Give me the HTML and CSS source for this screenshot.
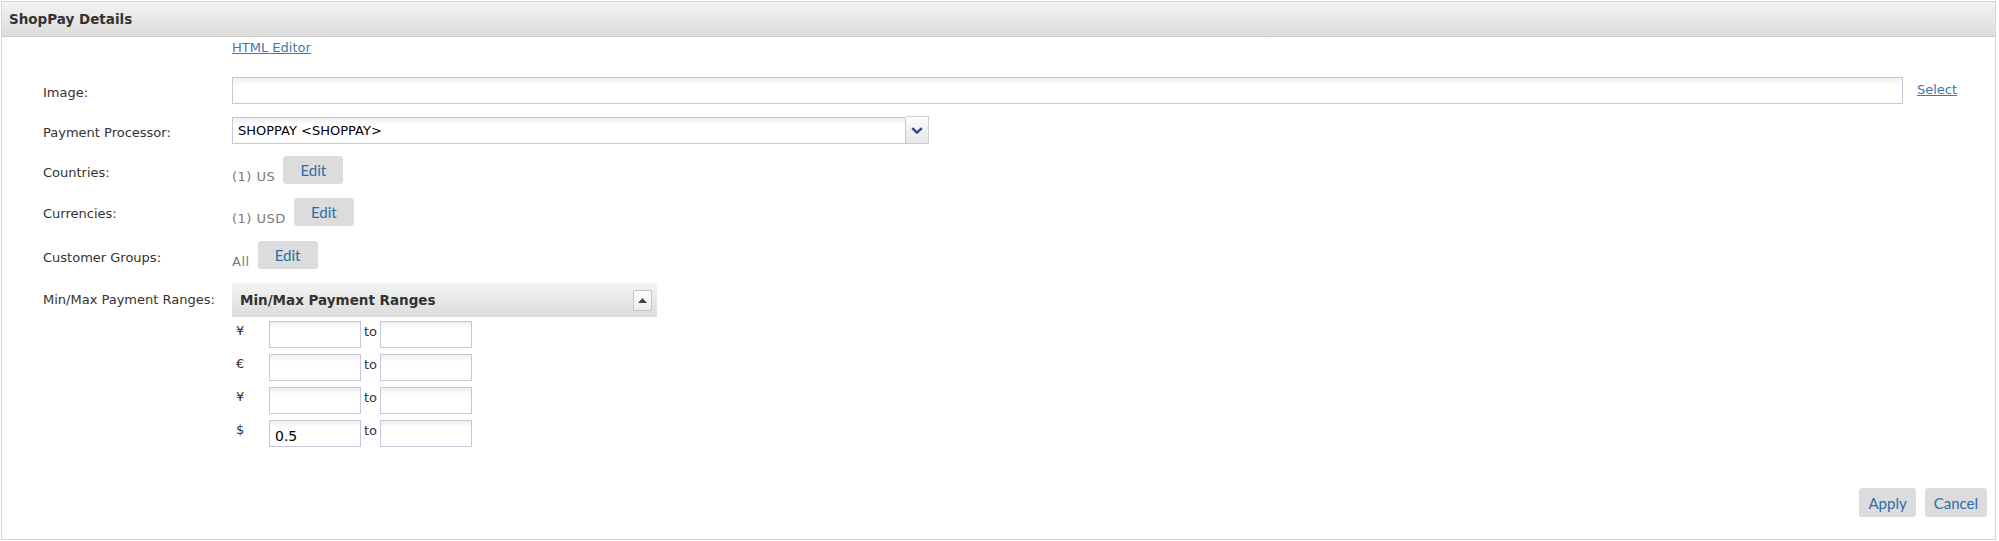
FILE: index.html
```html
<!DOCTYPE html>
<html>
<head>
<meta charset="utf-8">
<link rel="stylesheet" href="styles.css">
</head>
<body>
<div class="panel">
  <div class="panel-head">ShopPay Details</div>
  <div class="form">
    <div></div>
    <div class="cell editor"><a class="link" href="#">HTML Editor</a></div>
    <div></div>

    <div class="lbl">Image:</div>
    <div class="cell"><input class="txt wide" type="text"></div>
    <div class="cell"><a class="link select-link" href="#">Select</a></div>

    <div class="lbl">Payment Processor:</div>
    <div class="cell">
      <div class="dropdown">
        <div class="dd-text">SHOPPAY &lt;SHOPPAY&gt;</div>
        <div class="dd-btn"><svg width="12" height="7" viewBox="0 0 12 7"><path d="M1.2 1.2 L6 5.6 L10.8 1.2" fill="none" stroke="#2d4a86" stroke-width="2.4"/></svg></div>
      </div>
    </div>
    <div></div>

    <div class="lbl">Countries:</div>
    <div class="cell val"><span class="muted">(1) US</span><button class="btn edit">Edit</button></div>
    <div></div>

    <div class="lbl">Currencies:</div>
    <div class="cell val"><span class="muted">(1) USD</span><button class="btn edit">Edit</button></div>
    <div></div>

    <div class="lbl">Customer Groups:</div>
    <div class="cell val"><span class="muted">All</span><button class="btn edit">Edit</button></div>
    <div></div>

    <div class="lbl lbl-top">Min/Max Payment Ranges:</div>
    <div class="ranges">
      <div class="ranges-head">
        <span>Min/Max Payment Ranges</span>
        <span class="toggle"><svg width="9" height="5" viewBox="0 0 9 5"><path d="M0 5 L4.5 0 L9 5 Z" fill="#444"/></svg></span>
      </div>
      <div class="range-row"><span class="sym">¥</span><input class="txt small" type="text"><span class="to">to</span><input class="txt small" type="text"></div>
      <div class="range-row"><span class="sym">€</span><input class="txt small" type="text"><span class="to">to</span><input class="txt small" type="text"></div>
      <div class="range-row"><span class="sym">¥</span><input class="txt small" type="text"><span class="to">to</span><input class="txt small" type="text"></div>
      <div class="range-row"><span class="sym">$</span><input class="txt small val-in" type="text" value="0.5"><span class="to">to</span><input class="txt small" type="text"></div>
    </div>
    <div></div>
  </div>
  <div class="footer">
    <button class="btn action">Apply</button>
    <button class="btn action">Cancel</button>
  </div>
</div>
</body>
</html>
```

FILE: styles.css
```css
html, body {
  margin: 0;
  padding: 0;
  background: #fff;
}
body {
  font-family: "DejaVu Sans", Verdana, sans-serif;
  font-size: 13px;
  color: #333;
}
.panel {
  box-sizing: border-box;
  margin: 1px 0 0 1px;
  width: 1995px;
  height: 539px;
  border: 1px solid #d6d6d6;
  display: flex;
  flex-direction: column;
}
.panel-head {
  height: 34px;
  line-height: 34px;
  padding-left: 7px;
  font-weight: bold;
  font-size: 13.5px;
  color: #333;
  background: linear-gradient(#f3f3f3, #dcdcdc);
  border-bottom: 1px solid #c9c9c9;
}
.form {
  display: grid;
  grid-template-columns: 189px 1fr 92px;
  grid-template-rows: 33px 40px 40px 40px 43px 44px auto;
  padding-left: 41px;
}
.cell {
  display: flex;
  align-items: center;
}
.editor {
  align-items: flex-start;
  padding-top: 3px;
}
.lbl {
  align-self: center;
  line-height: 16px;
  padding-top: 5px;
  color: #333;
}
.lbl-top {
  align-self: start;
  margin-top: 6px;
  padding-top: 0;
  line-height: 34px;
}
.link {
  color: #4674b3;
  text-decoration: underline;
  line-height: 16px;
}
.select-link {
  padding-left: 14px;
}
.txt {
  box-sizing: border-box;
  height: 27px;
  border: 1px solid #c7c7d9;
  background: linear-gradient(#efefef, #fff 7px);
  font-family: "DejaVu Sans", Verdana, sans-serif;
  font-size: 13px;
  color: #000;
  padding: 2px 5px 0;
  margin: 0;
  outline: none;
}
.wide {
  width: 100%;
}
.dropdown {
  display: flex;
  width: 697px;
  height: 28px;
}
.dd-text {
  box-sizing: border-box;
  flex: 1;
  height: 27px;
  margin-top: 1px;
  border: 1px solid #c7c7d9;
  background: linear-gradient(#efefef, #fff 7px);
  color: #000;
  line-height: 25px;
  padding-left: 5px;
}
.dd-btn {
  box-sizing: border-box;
  width: 23px;
  height: 28px;
  border: 1px solid #cfcfcf;
  border-left: none;
  background: linear-gradient(#fdfdfd, #e6e6e6);
  display: flex;
  align-items: center;
  justify-content: center;
}
.val {
  align-items: flex-end;
  align-self: center;
  height: 28px;
  gap: 8px;
}
.muted {
  color: #7a7a7a;
  line-height: 16px;
  letter-spacing: 0.5px;
  margin-bottom: -1px;
}
.btn {
  font-family: Lato, "Open Sans", sans-serif;
  font-size: 15px;
  color: #2b6cae;
  background: #dcdcdc;
  border: none;
  border-radius: 3px;
  padding: 0;
  margin: 0;
}
.edit {
  width: 60px;
  height: 28px;
}
.ranges {
  width: 425px;
  margin-top: 6px;
}
.ranges-head {
  height: 34px;
  display: flex;
  align-items: center;
  justify-content: space-between;
  padding: 0 5px 0 8px;
  background: linear-gradient(#f4f4f4, #dcdcdc);
  font-weight: bold;
  font-size: 13.5px;
  color: #333;
}
.toggle {
  box-sizing: border-box;
  width: 19px;
  height: 21px;
  border: 1px solid #c4c4c4;
  border-radius: 2px;
  background: linear-gradient(#fefefe, #ececec);
  display: flex;
  align-items: center;
  justify-content: center;
}
.range-row {
  display: flex;
  align-items: flex-start;
  margin-top: 4px;
}
.range-row + .range-row {
  margin-top: 6px;
}
.sym {
  width: 33px;
  padding-left: 4px;
  line-height: 20px;
  color: #333;
}
.small {
  width: 92px;
}
.val-in {
  font-size: 14px;
  padding-top: 5px;
}
.to {
  width: 19px;
  padding-left: 3px;
  box-sizing: border-box;
  line-height: 22px;
  color: #333;
}
.footer {
  margin-top: auto;
  display: flex;
  justify-content: flex-end;
  gap: 9px;
  padding: 0 8px 22px 0;
}
.action {
  height: 29px;
  padding: 0 9px;
}
```
